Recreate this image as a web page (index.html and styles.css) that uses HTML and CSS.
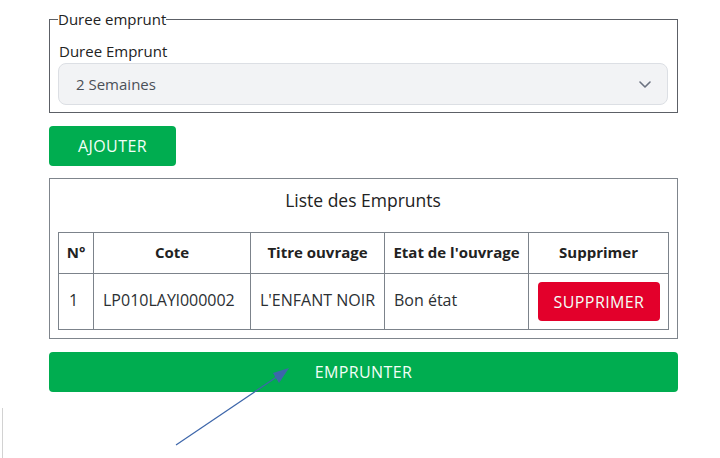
FILE: index.html
```html
<!DOCTYPE html>
<html lang="fr">
<head>
<meta charset="utf-8">
<title>Emprunt</title>
<link rel="stylesheet" href="styles.css">
</head>
<body>
<div class="page">
  <fieldset class="duree">
    <legend>Duree emprunt</legend>
    <label class="lbl" for="duree">Duree Emprunt</label>
    <div class="select">
      <span>2 Semaines</span>
      <svg class="chev" width="12" height="7" viewBox="0 0 12 7"><path d="M1 1l5 5 5-5" fill="none" stroke="#6b7280" stroke-width="1.6" stroke-linecap="round" stroke-linejoin="round"/></svg>
    </div>
  </fieldset>
  <button class="btn btn-green btn-add">AJOUTER</button>
  <div class="box">
    <div class="box-title">Liste des Emprunts</div>
    <table class="tbl">
      <colgroup>
        <col class="c1"><col class="c2"><col class="c3"><col class="c4"><col class="c5">
      </colgroup>
      <thead>
        <tr><th>N°</th><th>Cote</th><th>Titre ouvrage</th><th>Etat de l'ouvrage</th><th>Supprimer</th></tr>
      </thead>
      <tbody>
        <tr><td>1</td><td>LP010LAYl000002</td><td>L'ENFANT NOIR</td><td>Bon état</td><td><button class="btn btn-red">SUPPRIMER</button></td></tr>
      </tbody>
    </table>
  </div>
  <button class="btn btn-green btn-wide">EMPRUNTER</button>
</div>
<div class="edge-left"></div>
<svg class="arrow" width="720" height="458" viewBox="0 0 720 458">
  <line x1="176" y1="445" x2="281" y2="374" stroke="#3d66aa" stroke-width="1.2"/>
  <polygon points="289,368 273,373 279,383" fill="#3d66aa"/>
</svg>
</body>
</html>
```
FILE: styles.css
```css
html, body {
  margin: 0;
  padding: 0;
  background: #ffffff;
}
body {
  font-family: "Open Sans", "Noto Sans", sans-serif;
  color: #212529;
  width: 720px;
  height: 458px;
  overflow: hidden;
  position: relative;
}
.page {
  padding: 0 42px 0 49px;
  display: flex;
  flex-direction: column;
  align-items: flex-start;
}
.duree {
  margin: 9px 0 0 0;
  padding: 0 9px 7px 8px;
  border: 1px solid #5c6066;
  width: 629px;
  box-sizing: border-box;
  display: flex;
  flex-direction: column;
}
.duree legend {
  padding: 0;
  font-size: 15px;
  line-height: 20px;
  color: #222;
}
.lbl {
  font-size: 15px;
  line-height: 20px;
  margin: 12px 0 0 1px;
  color: #222;
}
.select {
  margin-top: 2px;
  height: 42px;
  box-sizing: border-box;
  border: 1px solid #dcdfe4;
  border-radius: 8px;
  background: #f2f3f5;
  display: flex;
  align-items: center;
  justify-content: space-between;
  padding: 0 16px 0 17px;
  font-size: 15px;
  color: #4b5058;
}
.chev { display: block; }
.btn {
  font-family: "Open Sans", "Noto Sans", sans-serif;
  border: none;
  color: #f3fff8;
  font-size: 16px;
  letter-spacing: 0.4px;
  border-radius: 4px;
  cursor: pointer;
  padding: 0;
}
.btn-green { background: #00ad50; }
.btn-add {
  margin-top: 13px;
  width: 127px;
  height: 40px;
}
.box {
  margin-top: 12px;
  width: 629px;
  box-sizing: border-box;
  border: 1px solid #7f858c;
  padding: 0 9px 8px 8px;
}
.box-title {
  text-align: center;
  font-size: 17.5px;
  line-height: 24px;
  padding: 9px 0 20px;
  color: #222;
}
.tbl {
  width: 100%;
  border-collapse: collapse;
  table-layout: fixed;
  font-size: 15px;
}
.c1 { width: 35px; }
.c2 { width: 157px; }
.c3 { width: 134px; }
.c4 { width: 144px; }
.c5 { width: 140px; }
.tbl th, .tbl td {
  border: 1px solid #7c838b;
  white-space: nowrap;
  overflow: hidden;
}
.tbl th {
  height: 41px;
  box-sizing: border-box;
  font-weight: 700;
  text-align: center;
  color: #222;
  padding: 0 0 2px;
}
.tbl td {
  height: 56px;
  box-sizing: border-box;
  padding: 0 0 3px 9px;
  font-size: 16px;
  color: #2b2f33;
}
.tbl td:first-child { padding-left: 10px; }
.btn-red {
  background: #e3002b;
  width: 122px;
  height: 39px;
  display: block;
  margin-top: 3px;
}
.btn-wide {
  margin-top: 13px;
  width: 629px;
  height: 40px;
}
.edge-left {
  position: absolute;
  left: 2px;
  top: 408px;
  width: 1px;
  height: 50px;
  background: #d2d2d2;
}
.arrow {
  position: absolute;
  left: 0;
  top: 0;
  pointer-events: none;
}
```
